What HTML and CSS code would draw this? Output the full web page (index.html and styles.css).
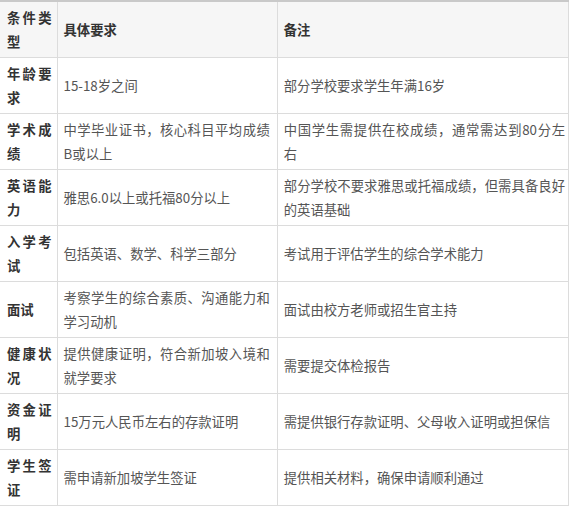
FILE: index.html
```html
<!DOCTYPE html>
<html lang="zh-CN">
<head>
<meta charset="utf-8">
<link rel="stylesheet" href="styles.css">
</head>
<body>
<table class="req-table">
  <colgroup>
    <col class="c1">
    <col class="c2">
    <col class="c3">
  </colgroup>
  <thead>
    <tr>
      <th class="label">条件类型</th>
      <th class="mid">具体要求</th>
      <th class="note">备注</th>
    </tr>
  </thead>
  <tbody>
    <tr><td class="label">年龄要求</td><td class="mid">15-18岁之间</td><td class="note">部分学校要求学生年满16岁</td></tr>
    <tr><td class="label">学术成绩</td><td class="mid">中学毕业证书，核心科目平均成绩B或以上</td><td class="note">中国学生需提供在校成绩，通常需达到80分左右</td></tr>
    <tr><td class="label">英语能力</td><td class="mid">雅思6.0以上或托福80分以上</td><td class="note">部分学校不要求雅思或托福成绩，但需具备良好的英语基础</td></tr>
    <tr><td class="label">入学考试</td><td class="mid">包括英语、数学、科学三部分</td><td class="note">考试用于评估学生的综合学术能力</td></tr>
    <tr><td class="label">面试</td><td class="mid">考察学生的综合素质、沟通能力和学习动机</td><td class="note">面试由校方老师或招生官主持</td></tr>
    <tr><td class="label">健康状况</td><td class="mid">提供健康证明，符合新加坡入境和就学要求</td><td class="note">需要提交体检报告</td></tr>
    <tr><td class="label">资金证明</td><td class="mid">15万元人民币左右的存款证明</td><td class="note">需提供银行存款证明、父母收入证明或担保信</td></tr>
    <tr><td class="label">学生签证</td><td class="mid">需申请新加坡学生签证</td><td class="note">提供相关材料，确保申请顺利通过</td></tr>
  </tbody>
</table>
</body>
</html>
```

FILE: styles.css
```css
html, body {
  margin: 0;
  padding: 0;
  background: #ffffff;
}

.req-table {
  border-collapse: collapse;
  table-layout: fixed;
  width: 569px;
  font-family: "Noto Sans CJK SC", "Noto Sans", sans-serif;
  font-size: 13.33px;
  line-height: 24px;
  color: #555555;
  border-top: 2px solid #c9c9c9;
  border-right: 1px solid #dcdcdc;
  border-bottom: 1px solid #dcdcdc;
}

.c1 { width: 57px; }
.c2 { width: 220px; }
.c3 { width: 291px; }

.req-table th,
.req-table td {
  height: 55px;
  box-sizing: border-box;
  padding: 4px 7px 3px 6px;
  vertical-align: middle;
  text-align: justify;
  border-bottom: 1px solid #dcdcdc;
  border-left: 1px solid #dcdcdc;
  word-break: break-all;
}

.req-table .note {
  padding-left: 6px;
  padding-right: 3px;
}

.req-table thead th {
  background: #f6f6f6;
  font-weight: 700;
  color: #333333;
}

.req-table .label {
  border-left: none;
  font-weight: 700;
  color: #333333;
  padding-left: 7px;
  padding-right: 5px;
}
```
